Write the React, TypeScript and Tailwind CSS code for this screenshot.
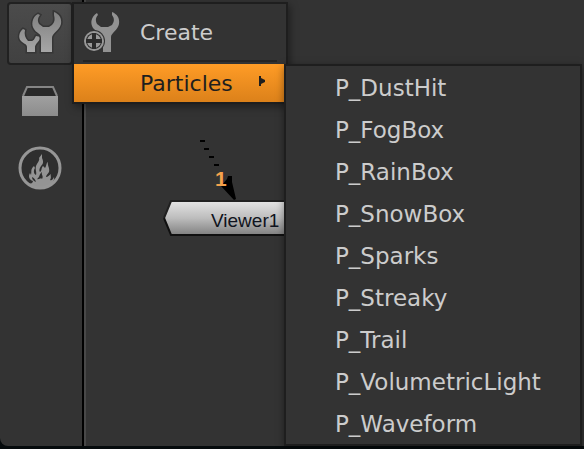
import React from "react";

const particles = [
  "P_DustHit",
  "P_FogBox",
  "P_RainBox",
  "P_SnowBox",
  "P_Sparks",
  "P_Streaky",
  "P_Trail",
  "P_VolumetricLight",
  "P_Waveform",
];

function WrenchesIcon() {
  return (
    <svg width="48" height="47" viewBox="0 0 48 47" aria-hidden="true">
      <defs>
        <linearGradient id="metal" gradientUnits="userSpaceOnUse" x1="0" y1="2" x2="0" y2="42">
          <stop offset="0" stopColor="#808080" />
          <stop offset="1" stopColor="#a6a6a6" />
        </linearGradient>
      </defs>
      <g stroke="#363636" strokeWidth="3" paintOrder="stroke" fill="url(#metal)">
        <path d="M7 19C3 22 2 28 5 31C8 34 11 34 11 37V42H19V37C19 34 23 32 25 27L20 26C18 30 18 30 16 31H12C9 28 8 24 9 20Z" />
        <path d="M22 4C16 7 15 15 18 19C20 23 25 23 25 28V42H36V28C36 23 43 21 45 14C46 8 43 4 38 2V5C39 9 39 12 36 15L33 17H27L23 14C21 10 22 8 24 5Z" />
      </g>
    </svg>
  );
}

function CreateIcon() {
  return (
    <svg width="40" height="46" viewBox="0 0 40 46" aria-hidden="true">
      <path
        d="M14 4C8 8 7 14 10 19C13 23 20 24 20 28V43H28V28C28 24 35 21 36 15C37 9 34 5 29 3V6C32 10 31 13 29 16L25 18H18L14 15C12 11 13 8 15 6Z"
        fill="#929292"
      />
      <circle cx="11" cy="32" r="11" fill="#333333" />
      <circle cx="11" cy="32" r="10" fill="#999999" />
      <circle cx="11" cy="32" r="8" fill="#2b2b2b" />
      <circle cx="11" cy="32" r="7" fill="#999999" />
      <path d="M11 24V40M3 32H19" stroke="#2b2b2b" strokeWidth="4" />
    </svg>
  );
}

function BoxIcon() {
  return (
    <svg width="36" height="30" viewBox="0 0 36 30" aria-hidden="true">
      <defs>
        <linearGradient id="box" x1="0" y1="0" x2="0" y2="1">
          <stop offset="0" stopColor="#a0a0a0" />
          <stop offset="1" stopColor="#8c8c8c" />
        </linearGradient>
      </defs>
      <path d="M1 10L5 1H31L35 10" fill="#292929" stroke="#858585" strokeWidth="2" />
      <path d="M0 10H36V30H0Z" fill="url(#box)" />
    </svg>
  );
}

function FlameIcon() {
  return (
    <svg width="44" height="44" viewBox="0 0 44 44" aria-hidden="true">
      <circle cx="22" cy="22" r="20" fill="#2e2e2e" />
      <path
        d="M10 38C13 38 15 37 15 35C11 34 10 30 12 27L13 29C14 25 12 24 16 20L17 22C15 25 16 28 18 29C19 26 17 24 18 20C20 16 22 14 21 12L24 8L24 12C26 16 25 18 23 20C21 23 21 25 22 26C24 25 23 22 25 20L27 22C29 19 28 17 30 16C29 19 32 22 31 26C30 28 28 29 28 31C30 31 31 29 33 28C32 30 34 31 32 34C34 35 35 33 36 31C37 34 34 36 34 38C30 43 14 43 10 38Z"
        fill="#949494"
      />
      <path d="M19 33C22 31 21 28 24 26C23 29 26 30 24 33C23 31 21 34 19 33ZM14 31C16 32 17 33 18 36C16 35 14 34 14 31Z" fill="#2e2e2e" />
      <circle cx="22" cy="22" r="20" fill="none" stroke="#969696" strokeWidth="3" />
    </svg>
  );
}

function ViewerNode() {
  return (
    <svg width="140" height="104" viewBox="0 0 140 104" role="img" aria-label="Viewer1 node">
      <defs>
        <linearGradient id="node" x1="0" y1="0" x2="0" y2="1">
          <stop offset="0" stopColor="#e4e4e4" />
          <stop offset="0.5" stopColor="#bdbdbd" />
          <stop offset="1" stopColor="#808080" />
        </linearGradient>
      </defs>
      <path d="M37 6H42M41 14H46M46 22H51M51 30H56" stroke="#000000" strokeWidth="2" />
      <path d="M58 51L64 44L65 41H69V47L73 64L71 65Z" fill="#000000" />
      <path d="M8 66H140V100H8L1 83Z" fill="url(#node)" />
      <path d="M140 66H8L1 83" fill="none" stroke="#202020" strokeWidth="2" />
      <path d="M1 83L8 100H140" fill="none" stroke="#101010" strokeWidth="2" />
      <text x="52" y="51" fontSize="21" fill="#f5a24c" className="font-['Liberation_Sans',sans-serif] font-bold">
        1
      </text>
      <text x="48" y="92" fontSize="19" fill="#101420" className="font-['Liberation_Sans',sans-serif]">
        Viewer1
      </text>
    </svg>
  );
}

export default function App() {
  return (
    <div className="relative flex h-screen w-full overflow-hidden bg-[#060b0d] pb-[3px] font-['DejaVu_Sans',sans-serif] text-[22px] leading-7 text-[#cccccc]">
      <aside className="flex w-[82px] shrink-0 flex-col items-start rounded-bl-lg bg-[#333333] pl-[7px] pt-0.5">
        <button
          aria-label="Particle tools"
          className="flex h-[63px] w-[66px] items-center justify-center rounded border-2 border-[#212121] bg-linear-to-b from-[#4b4b4b] to-[#414141]"
        >
          <WrenchesIcon />
        </button>
        <button aria-label="Toolbox" className="mt-[21px] flex w-[66px] justify-center">
          <BoxIcon />
        </button>
        <button aria-label="Fire" className="mt-[30px] flex w-[66px] justify-center">
          <FlameIcon />
        </button>
      </aside>

      <main className="relative min-w-0 flex-1 border-l-2 border-black bg-[#333333]">
        <div className="h-full border-l-2 border-[#484848]" />
        <div className="absolute left-[79px] top-[135px]">
          <ViewerNode />
        </div>
      </main>

      <div
        role="menu"
        className="absolute left-[72px] top-0.5 w-[216px] border-2 border-[#1e1e1e] bg-[#333333] shadow-[2px_3px_8px_#00000066]"
      >
        <button role="menuitem" className="flex h-14 w-full items-center gap-[17px] pl-[9px] text-left">
          <CreateIcon />
          <span className="pt-0.5">Create</span>
        </button>
        <div className="mx-[9px] mb-0.5 h-0.5 bg-[#242424]" />
        <button
          role="menuitem"
          aria-haspopup="menu"
          className="flex h-[38px] w-full items-center justify-between bg-linear-to-b from-[#ff9c26] to-[#dc811a] pl-[66px] pr-[21px] text-left text-[#1e1e1e]"
        >
          <span className="pt-0.5">Particles</span>
          <svg width="6" height="10" viewBox="0 0 6 10" className="mb-1" aria-hidden="true">
            <path d="M0 0H2V2L6 4V6L2 8V10H0Z" fill="#1e1e1e" />
          </svg>
        </button>
      </div>

      <div
        role="menu"
        className="absolute left-[284px] top-16 w-[298px] border-2 border-[#1e1e1e] bg-[#333333] shadow-[0_2px_8px_#00000066]"
      >
        {particles.map((name) => (
          <button
            key={name}
            role="menuitem"
            className="flex h-[42px] w-full items-center pl-[49px] pt-0.5 text-left text-[23px]"
          >
            {name}
          </button>
        ))}
      </div>
    </div>
  );
}
